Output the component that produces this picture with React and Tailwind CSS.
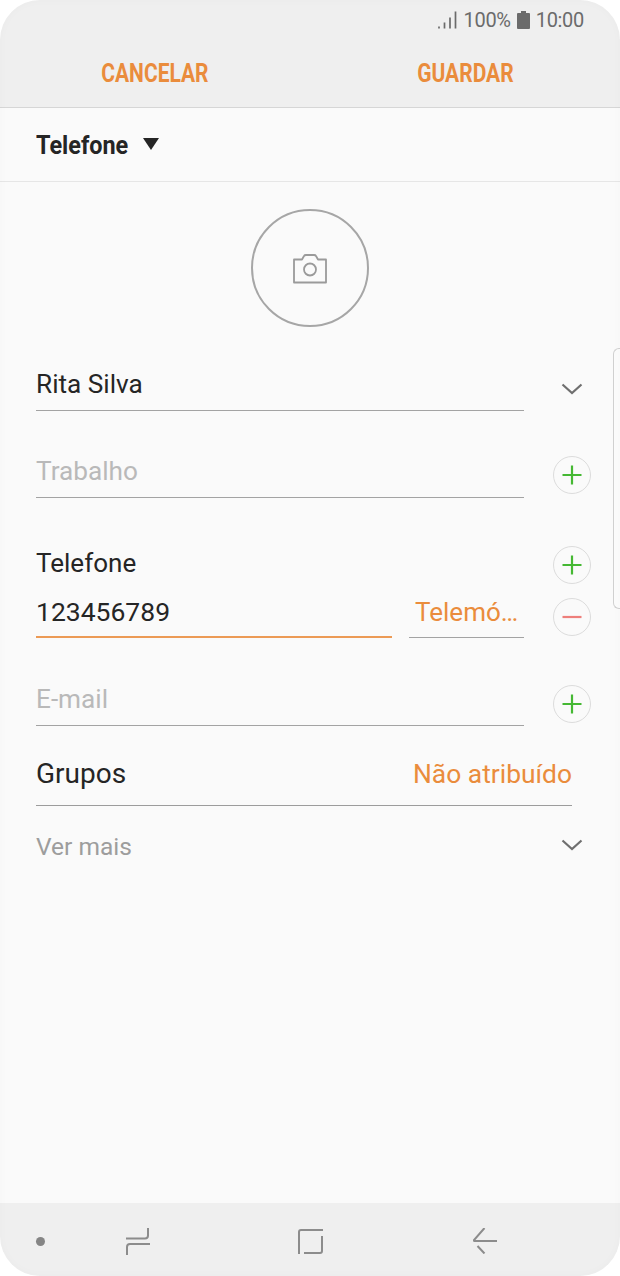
const font = { fontFamily: 'Roboto, "Liberation Sans", sans-serif' };

function Plus() {
  return (
    <div className="w-[38px] h-[38px] rounded-full border border-[#dcdcdc] flex items-center justify-center shrink-0">
      <svg width="20" height="20" viewBox="0 0 20 20"><path d="M10 .5v19M.5 10h19" stroke="#45b833" strokeWidth="2.200" fill="none" /></svg>
    </div>
  );
}
function Minus() {
  return (
    <div className="w-[38px] h-[38px] rounded-full border border-[#dcdcdc] flex items-center justify-center shrink-0">
      <svg width="20" height="20" viewBox="0 0 20 20"><path d="M.5 10h19" stroke="#ee7f7b" strokeWidth="2.200" fill="none" /></svg>
    </div>
  );
}
function Chevron() {
  return (
    <svg width="22" height="12" viewBox="0 0 22 12"><path d="M1.500 1.500L11 10l9.500-8.500" stroke="#6f6f6f" strokeWidth="2.200" fill="none" /></svg>
  );
}

export default function App() {
  return (
    <div className="w-[620px] h-[1276px] bg-white overflow-hidden" style={font}>
      <div className="relative w-full h-full bg-[#fafafa] rounded-[40px] overflow-hidden flex flex-col">
        {/* top bar */}
        <div className="h-[108px] shrink-0 bg-[#efefef] border-b border-[#d6d6d6] flex flex-col">
          <div className="h-[40px] flex items-center justify-end pr-[36px] text-[#6b6b6b] text-[20px] tracking-[-0.3px]">
            <svg width="20" height="18" viewBox="0 0 20 18" className="mr-[6px]">
              <path d="M1 17.500v-2M6.500 17.500v-6M12 17.500v-11M17.500 17.500v-17" stroke="#6b6b6b" strokeWidth="1.700" fill="none" />
            </svg>
            <span>100%</span>
            <svg width="13" height="18" viewBox="0 0 13 18" className="mx-[6px]">
              <path d="M4 0h5v2h3a1 1 0 0 1 1 1v14a1 1 0 0 1-1 1H1a1 1 0 0 1-1-1V3a1 1 0 0 1 1-1h3z" fill="#6b6b6b" />
            </svg>
            <span>10:00</span>
          </div>
          <div className="flex-1 flex items-center text-[#ea8c3c] text-[25px] font-bold">
            <div className="w-[310px] flex justify-center"><span className="inline-block scale-x-[0.84]">CANCELAR</span></div>
            <div className="w-[310px] flex justify-center"><span className="inline-block scale-x-[0.84]">GUARDAR</span></div>
          </div>
        </div>
        {/* account selector */}
        <div className="h-[74px] shrink-0 border-b border-[#e6e6e6] pl-[36px] flex items-center pt-[2px]">
          <span className="inline-block text-[26px] font-bold text-[#252525] origin-left scale-x-[0.9] w-[92px] whitespace-nowrap">Telefone</span>
          <svg width="16" height="12" viewBox="0 0 16 12" className="ml-[15px] mb-[3px]"><path d="M0 0h16L8 12z" fill="#252525" /></svg>
        </div>
        {/* photo */}
        <div className="flex justify-center pt-[27px] h-[145px] shrink-0">
          <div className="w-[118px] h-[118px] rounded-full border-2 border-[#a6a6a6] flex items-center justify-center">
            <svg width="36" height="31" viewBox="0 0 36 31">
              <path d="M2 6.500h8l2-3.500q.5-1 2-1h8q1.500 0 2 1l2 3.500h8v23H2z" stroke="#9a9a9a" strokeWidth="1.800" fill="none" strokeLinejoin="round" />
              <circle cx="18" cy="16.500" r="6" stroke="#9a9a9a" strokeWidth="1.800" fill="none" />
            </svg>
          </div>
        </div>
        {/* name */}
        <div className="h-[84px] shrink-0 pl-[36px] flex">
          <div className="w-[488px] h-[84px] pt-[43px]">
            <div className="h-[41px] border-b border-[#a3a3a3] text-[26.200px] leading-[28px] text-[#252525]">Rita Silva</div>
          </div>
          <div className="pl-[37px] pt-[56px]"><Chevron /></div>
        </div>
        {/* organisation */}
        <div className="h-[87px] shrink-0 pl-[36px] flex">
          <div className="w-[488px] pt-[46px]">
            <div className="h-[41px] border-b border-[#a3a3a3] text-[26.200px] leading-[28px] text-[#b9b9b9]">Trabalho</div>
          </div>
          <div className="pl-[29px] pt-[45px]"><Plus /></div>
        </div>
        {/* phone label */}
        <div className="h-[49px] shrink-0 pl-[36px] flex">
          <div className="w-[488px] pt-[51px] text-[26px] leading-[28px] text-[#252525] h-[49px] whitespace-nowrap">Telefone</div>
          <div className="pl-[29px] pt-[48px]"><Plus /></div>
        </div>
        {/* phone number */}
        <div className="h-[91px] shrink-0 pl-[36px] flex">
          <div className="w-[356px] pt-[51px]">
            <div className="h-[40px] border-b-2 border-[#ec9a55] text-[26.500px] leading-[28px] text-[#252525]">123456789</div>
          </div>
          <div className="w-[115px] ml-[17px] pt-[51px]">
            <div className="h-[40px] border-b border-[#a3a3a3] text-[26px] leading-[28px] text-[#ea8c3c] pl-[6px] whitespace-nowrap">Telemó…</div>
          </div>
          <div className="pl-[29px] pt-[51px]"><Minus /></div>
        </div>
        {/* email */}
        <div className="h-[88px] shrink-0 pl-[36px] flex">
          <div className="w-[488px] pt-[47px]">
            <div className="h-[41px] border-b border-[#a3a3a3] text-[26.200px] leading-[28px] text-[#b9b9b9]">E-mail</div>
          </div>
          <div className="pl-[29px] pt-[47px]"><Plus /></div>
        </div>
        {/* groups */}
        <div className="h-[80px] shrink-0 pl-[36px] pr-[48px]">
          <div className="h-[80px] border-b border-[#9c9c9c] flex justify-between items-start pt-[33px] leading-[30px]">
            <span className="text-[#252525] text-[28px]">Grupos</span>
            <span className="text-[#ea8c3c] text-[26.400px]">Não atribuído</span>
          </div>
        </div>
        {/* more */}
        <div className="h-[80px] shrink-0 pl-[36px] pr-[37px] flex justify-between pt-[27px]">
          <span className="text-[24.500px] leading-[28px] text-[#9d9d9d]">Ver mais</span>
          <div className="pt-[6px]"><Chevron /></div>
        </div>
        <div className="flex-1" />
        {/* nav bar */}
        <div className="h-[73px] shrink-0 bg-[#efefef] flex items-center pt-[3px]">
          <div className="w-[9px] h-[9px] rounded-full bg-[#858585] ml-[36px]" />
          <svg width="24" height="27" viewBox="0 0 24 27" className="ml-[81px]">
            <path d="M0 10.500H19q3 0 3-3V0M24 16H4q-3 0-3 3v8" stroke="#8c8c8c" strokeWidth="2" fill="none" />
          </svg>
          <svg width="25" height="25" viewBox="0 0 25 25" className="ml-[148px]">
            <path d="M1 25V3q0-2 2-2h22M6 24h16q2 0 2-2V7" stroke="#8c8c8c" strokeWidth="2" fill="none" />
          </svg>
          <svg width="24" height="26" viewBox="0 0 24 26" className="ml-[150px]">
            <path d="M11.500 0L1 12q-.5 1 1 1h22M4.500 18l7 7.500" stroke="#8c8c8c" strokeWidth="2" fill="none" />
          </svg>
        </div>
        {/* edge handle */}
        <div className="absolute right-0 top-[348px] w-[7px] h-[261px] border border-r-0 border-[#d0d0d0] rounded-l-[6px] bg-[#fbfbfb]" />
        {/* soft screen edge */}
        <div className="absolute inset-0 rounded-[40px] pointer-events-none shadow-[inset_0_0_10px_rgba(0,0,0,0.025)]" />
      </div>
    </div>
  );
}
